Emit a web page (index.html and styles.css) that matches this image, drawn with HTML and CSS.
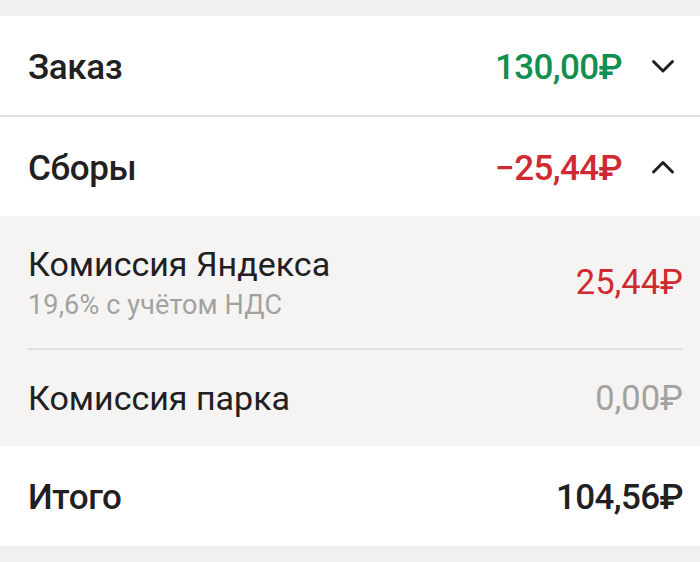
FILE: index.html
```html
<!DOCTYPE html>
<html lang="ru">
<head>
<meta charset="utf-8">
<link rel="stylesheet" href="styles.css">
</head>
<body>
<div class="page">
  <section class="card">
    <div class="row main">
      <span class="label">Заказ</span>
      <span class="amount green">130,00₽</span>
      <svg class="chev" width="24" height="24" viewBox="0 0 24 24"><path d="M2.5 7.5 L12 17 L21.5 7.5" /></svg>
    </div>
    <div class="divider"></div>
    <div class="row main">
      <span class="label">Сборы</span>
      <span class="amount red">−25,44₽</span>
      <svg class="chev" width="24" height="24" viewBox="0 0 24 24"><path d="M2.5 17 L12 7.5 L21.5 17" /></svg>
    </div>
  </section>
  <section class="details">
    <div class="item first">
      <div class="item-text">
        <div class="title">Комиссия Яндекса</div>
        <div class="sub">19,6% с учётом НДС</div>
      </div>
      <span class="value red">25,44₽</span>
    </div>
    <div class="inset-divider"></div>
    <div class="item second">
      <div class="item-text">
        <div class="title">Комиссия парка</div>
      </div>
      <span class="value muted">0,00₽</span>
    </div>
  </section>
  <section class="card">
    <div class="row total">
      <span class="label">Итого</span>
      <span class="amount">104,56₽</span>
    </div>
  </section>
</div>
</body>
</html>
```
FILE: styles.css
```css
html, body {
  margin: 0;
  padding: 0;
}
body {
  background: #f1f0ee;
  font-family: Roboto, "Noto Sans", sans-serif;
  color: #21201f;
  width: 700px;
  height: 562px;
  overflow: hidden;
}
.page {
  padding-top: 16px;
  display: flex;
  flex-direction: column;
}
.card {
  background: #ffffff;
}
.row {
  display: flex;
  align-items: center;
  padding-left: 28px;
  box-sizing: border-box;
  padding-top: 3px;
}
.row.main {
  height: 99px;
  padding-right: 25px;
}
.row.total {
  height: 100px;
  padding-right: 17px;
}
.label {
  flex: 1;
  font-size: 35px;
  font-weight: 500;
  letter-spacing: -0.4px;
}
.amount {
  font-size: 35px;
  font-weight: 500;
  letter-spacing: -0.6px;
}
.green { color: #118f50; }
.red { color: #cf2a31; }
.muted { color: #a3a2a0; }
.chev {
  margin-left: 29px;
  margin-top: -3px;
  fill: none;
  stroke: #21201f;
  stroke-width: 3;
  stroke-linecap: round;
  stroke-linejoin: round;
}
.divider {
  height: 2px;
  background: #e4e3e1;
}
.details {
  background: #f5f4f2;
}
.item {
  display: flex;
  align-items: center;
  padding: 0 17px 0 28px;
}
.item.first { height: 132px; }
.item.second { height: 96px; }
.item-text {
  flex: 1;
  display: flex;
  flex-direction: column;
}
.title {
  font-size: 34px;
  line-height: 42px;
}
.sub {
  font-size: 27px;
  color: #a3a2a0;
  line-height: 34px;
  margin-top: 3px;
  letter-spacing: 0.15px;
}
.value {
  font-size: 34.5px;
}
.inset-divider {
  height: 2px;
  margin: 0 17px 0 28px;
  background: #e0dfdd;
}
```
